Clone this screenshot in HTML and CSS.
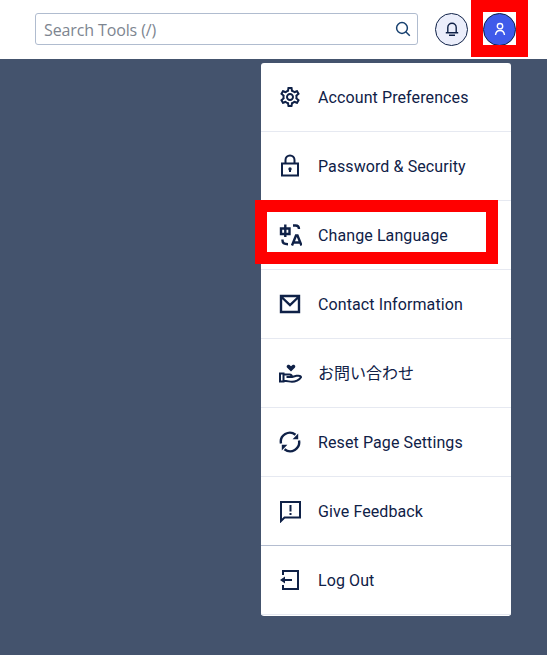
FILE: index.html
```html
<!doctype html>
<html lang="en-us">
	<head>
		<meta charset="utf-8">
		<title>Account Menu</title>
		<link rel="stylesheet" href="styles.css">
	</head>
	<body>
		<header class="top-bar">
			<div class="search-box">
				<span class="search-text">Search Tools (/)</span>
				<svg class="search-icon" viewBox="0 0 16 16"><circle cx="7" cy="7" r="5.400"/><path d="M10.800 10.800l4 4"/></svg>
			</div>
			<button class="round-but bell">
				<svg viewBox="0 0 16 16"><path d="M1.800 11.700h12.400M3.800 11.700V6.500a4.200 4.200 0 0 1 8.400 0v5.200M5 14.300h6"/></svg>
			</button>
			<button class="round-but user">
				<svg viewBox="0 0 16 16"><circle cx="8" cy="5.200" r="2.700"/><path d="M3.500 14c.3-3 2-4.500 4.500-4.500s4.200 1.500 4.500 4.500"/></svg>
			</button>
			<div class="mark mark-user"></div>
		</header>

		<main class="page">
			<nav class="menu">
				<a class="menu-item">
					<svg class="fill" viewBox="0 0 24 24"><path d="M19.43 12.98c.04-.32.07-.64.07-.98 0-.34-.03-.66-.07-.98l2.11-1.65c.19-.15.24-.42.12-.64l-2-3.46c-.09-.16-.26-.25-.44-.25-.06 0-.12.01-.17.03l-2.49 1c-.52-.4-1.08-.73-1.69-.98l-.38-2.65C14.46 2.18 14.25 2 14 2h-4c-.25 0-.46.18-.49.42l-.38 2.65c-.61.25-1.17.59-1.69.98l-2.49-1c-.06-.02-.12-.03-.18-.03-.17 0-.34.09-.43.25l-2 3.46c-.13.22-.07.49.12.64l2.11 1.65c-.04.32-.07.65-.07.98 0 .33.03.66.07.98l-2.11 1.65c-.19.15-.24.42-.12.64l2 3.46c.09.16.26.25.44.25.06 0 .12-.01.17-.03l2.49-1c.52.4 1.08.73 1.69.98l.38 2.65c.03.24.24.42.49.42h4c.25 0 .46-.18.49-.42l.38-2.65c.61-.25 1.17-.59 1.69-.98l2.49 1c.06.02.12.03.18.03.17 0 .34-.09.43-.25l2-3.46c.12-.22.07-.49-.12-.64l-2.11-1.65zm-1.98-1.71c.04.31.05.52.05.73 0 .21-.02.43-.05.73l-.14 1.13.89.7 1.08.84-.7 1.21-1.27-.51-1.04-.42-.9.68c-.43.32-.84.56-1.25.73l-1.06.43-.16 1.13-.2 1.35h-1.4l-.19-1.35-.16-1.13-1.06-.43c-.43-.18-.83-.41-1.23-.71l-.91-.7-1.06.43-1.27.51-.7-1.21 1.08-.84.89-.7-.14-1.13c-.03-.31-.05-.54-.05-.74s.02-.43.05-.73l.14-1.13-.89-.7-1.08-.84.7-1.21 1.27.51 1.04.42.9-.68c.43-.32.84-.56 1.25-.73l1.06-.43.16-1.13.2-1.35h1.39l.19 1.35.16 1.13 1.06.43c.43.18.83.41 1.23.71l.91.7 1.06-.43 1.27-.51.7 1.21-1.07.85-.89.7.14 1.13zM12 8c-2.21 0-4 1.79-4 4s1.79 4 4 4 4-1.79 4-4-1.79-4-4-4zm0 6c-1.1 0-2-.9-2-2s.9-2 2-2 2 .9 2 2-.9 2-2 2z"/></svg>
					<span>Account Preferences</span>
				</a>
				<a class="menu-item">
					<svg class="line" viewBox="0 0 24 24"><path d="M4 9.500h16v12H4zM7.500 9.500V6a4.500 4.500 0 0 1 9 0v3.500"/><path d="M12 15v3"/><circle class="dot" cx="12" cy="15" r="1.700"/></svg>
					<span>Password &amp; Security</span>
				</a>
				<a class="menu-item">
					<svg class="line heavy" viewBox="0 0 24 24"><path d="M3 5.500h8.500v5.500H3zM7.300 1.500v12.500"/><path d="M15 2.500h2.500c2 0 3.500 1.200 3.500 3.500M4.500 16.500v1c0 2.500 1.500 3.700 5.500 3.700"/><path d="M14 22.500l4-10h1.500l4 10M15.400 19.500h6.700"/></svg>
					<span>Change Language</span>
				</a>
				<a class="menu-item">
					<svg class="line heavy" viewBox="0 0 24 24"><path d="M3 4h18v16H3zM3.500 5L12 13 20.500 5"/></svg>
					<span>Contact Information</span>
				</a>
				<a class="menu-item">
					<svg class="line" viewBox="0 0 24 24"><path d="M2 12.500h3.500v8H2zM5.500 13.500h6c1.500 0 2.500.800 2.500 2.500H8.500M14 16l4.500-1.200h2c1.500 0 2.500.700 2.500 1.500-1.500 2.700-6 4.500-9 4.500-3 0-4-1-8.500-1"/><path class="solid" d="M13 10.500L9.200 6.800c-1.500-1.700.500-4 2.300-2.800L13 5.200 14.500 4c1.800-1.200 3.800 1.100 2.300 2.800z"/></svg>
					<span class="jp">お問い合わせ</span>
				</a>
				<a class="menu-item">
					<svg class="line heavy" viewBox="0 0 24 24"><path d="M3 13.500a9 9 0 0 1 14.500-8.700M21 10.500a9 9 0 0 1-14.500 8.700"/><path class="solid" d="M20.200 3.500v5.800h-5.600zM3.800 20.500v-5.800h5.600z"/></svg>
					<span>Reset Page Settings</span>
				</a>
				<a class="menu-item">
					<svg class="line" viewBox="0 0 24 24"><path d="M3 3h19v15.500H6.500L3 22z"/><path d="M12.500 6v6.500M12.500 14v2"/></svg>
					<span>Give Feedback</span>
				</a>
				<a class="menu-item logout">
					<svg class="line" viewBox="0 0 24 24"><path d="M5 7V3h15v18H5v-4M14 12H5"/><path class="solid" d="M7 8.500v7L2 12z"/></svg>
					<span>Log Out</span>
				</a>
			</nav>
			<div class="mark mark-lang"></div>
		</main>
	</body>
</html>
```

FILE: styles.css
```css
html, body {
	height: 100%;
}
body {
	margin: 0;
	background: #44536d;
	color: #0f2147;
	font-family: "Roboto", sans-serif;
	font-size: 16px;
	overflow: hidden;
}
.top-bar {
	position: relative;
	display: flex;
	align-items: center;
	height: 59px;
	box-sizing: border-box;
	padding: 0 0 1px 35px;
	background: #fff;
}
.search-box {
	display: flex;
	align-items: center;
	justify-content: space-between;
	width: 383px;
	height: 32px;
	box-sizing: border-box;
	padding: 0 6px 0 8px;
	border: 1px solid #b0bccf;
	border-radius: 3px;
}
.search-text {
	margin-top: 2px;
	font-family: "Open Sans", sans-serif;
	font-size: 16px;
	letter-spacing: -0.12px;
	color: #7d8590;
}
.search-icon {
	width: 16px;
	height: 16px;
	fill: none;
	stroke: #17406f;
	stroke-width: 1.500;
}
.round-but {
	display: flex;
	align-items: center;
	justify-content: center;
	width: 33px;
	height: 33px;
	padding: 0;
	border: 1px solid #0f2147;
	border-radius: 50%;
}
.round-but svg {
	width: 16px;
	height: 16px;
	fill: none;
	stroke-width: 1.400;
}
.bell {
	margin-left: 17px;
	background: #ebeefb;
}
.bell svg {
	stroke: #0f2147;
}
.user {
	margin-left: 15px;
	background: #3f5bea;
}
.user svg {
	stroke: #fff;
}

/* red annotation boxes drawn over the page */
.mark {
	position: absolute;
	box-sizing: border-box;
	border: 12px solid #f00;
	pointer-events: none;
}
.mark-user {
	left: 471px;
	top: 0;
	width: 57px;
	height: 57px;
}
.mark-lang {
	left: 255px;
	top: 141px;
	width: 243px;
	height: 64px;
}

.page {
	position: relative;
	display: flex;
	justify-content: flex-end;
	padding: 4px 36px 0 0;
}
.menu {
	width: 250px;
	height: 553px;
	background: #fff;
	border-radius: 3px;
	overflow: hidden;
}
.menu-item {
	display: flex;
	align-items: center;
	gap: 16px;
	height: 69px;
	box-sizing: border-box;
	padding-left: 17px;
	border-bottom: 1px solid #e6e9f1;
	color: #0f2147;
	letter-spacing: 0.1px;
}
.menu-item:nth-child(7) {
	border-bottom-color: #b4bdd0;
}
.menu-item svg {
	flex: none;
	width: 24px;
	height: 24px;
}
.menu-item svg.fill {
	fill: #0f2147;
}
.menu-item svg.line {
	fill: none;
	stroke: #0f2147;
	stroke-width: 2;
}
.menu-item svg.heavy {
	stroke-width: 2.400;
}
.menu-item svg .solid, .menu-item svg .dot {
	fill: #0f2147;
	stroke: none;
}
.jp {
	margin-top: -2px;
	font-family: "Noto Sans CJK JP", sans-serif;
	letter-spacing: 0;
	font-weight: 400;
}
```
